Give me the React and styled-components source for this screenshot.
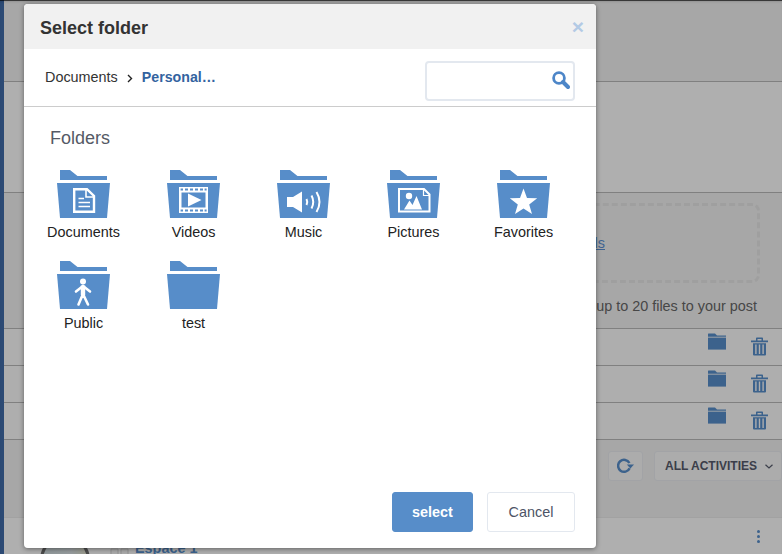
import React from 'react';
import styled, { createGlobalStyle } from 'styled-components';

const GlobalStyle = createGlobalStyle`
  html, body {
    margin: 0;
    padding: 0;
    height: 100%;
    overflow: hidden;
    font-family: "Liberation Sans", Arial, sans-serif;
  }
`;

const Page = styled.div`
  position: relative;
  display: flex;
  width: 782px;
  height: 554px;
  overflow: hidden;
  background: #f0f0f0;
`;

const Rail = styled.div`
  width: 4px;
  flex: none;
  background: #406aa7;
`;

const Main = styled.div`
  flex: 1;
  display: flex;
  flex-direction: column;
  min-width: 0;
`;

const Section = styled.div`
  height: ${(p) => p.$height}px;
  flex: none;
  box-sizing: border-box;
  background: ${(p) => p.$bg || '#f0f0f0'};
  border-bottom: 1px solid ${(p) => p.$line || '#b8b8b8'};
`;

const UploadArea = styled(Section)`
  display: flex;
  flex-direction: column;
  align-items: flex-end;
  padding: 10px 22px 0 0;
`;

const DropZone = styled.div`
  width: 400px;
  height: 80px;
  box-sizing: border-box;
  display: flex;
  align-items: center;
  justify-content: flex-end;
  padding-right: 152px;
  border: 3px dashed #e4e4e4;
  border-radius: 8px;
`;

const DropLink = styled.a`
  color: #5b8fd0;
  font-size: 14.4px;
  text-decoration: underline;
`;

const UploadHint = styled.div`
  margin: 13px 3px 0 0;
  color: #666;
  font-size: 14.4px;
  line-height: 20px;
`;

const FileRow = styled(Section)`
  display: flex;
  justify-content: flex-end;
  align-items: flex-start;
  gap: 25px;
  padding: 4px 14px 0 0;
`;

const Toolbar = styled(Section)`
  display: flex;
  justify-content: flex-end;
  gap: 11px;
  padding-top: 11px;
`;

const ToolButton = styled.div`
  height: 30px;
  box-sizing: border-box;
  display: flex;
  align-items: center;
  gap: 8px;
  padding: ${(p) => p.$pad};
  background: #f6f6f6;
  border: 1px solid #e8eaee;
  border-radius: 3px;
  color: #555a6a;
  font-size: 12px;
  font-weight: 700;
  white-space: nowrap;
`;

const ActivityRow = styled.div`
  position: relative;
  flex: 1;
  display: flex;
  align-items: flex-start;
  padding: 17px 0 0 36px;
  background: #fbfbfb;
`;

const Avatar = styled.div`
  width: 50px;
  height: 50px;
  flex: none;
  box-sizing: border-box;
  border: 3px solid #6a6a6a;
  border-radius: 50%;
  background: linear-gradient(90deg, #cfdade 0%, #d8e0e2 65%, #dcdcc8 100%);
`;

const ActivityMark = styled.svg`
  flex: none;
  margin: 13px 5px 0 20px;
`;

const ActivityName = styled.div`
  margin-top: 5px;
  color: #578dc9;
  font-size: 14.4px;
  font-weight: 700;
  line-height: 16px;
`;

const Kebab = styled.div`
  position: absolute;
  top: 12px;
  right: 22px;
  display: flex;
  flex-direction: column;
  gap: 2px;
`;

const Dot = styled.span`
  width: 3px;
  height: 3px;
  border-radius: 50%;
  background: #578dc9;
`;

const Overlay = styled.div`
  position: absolute;
  inset: 0;
  background: rgba(0, 0, 0, 0.3);
  box-shadow: inset 0 1px 0 rgba(0, 0, 0, 0.6), inset 0 3px 3px -2px rgba(0, 0, 0, 0.25);
`;

const ModalShadow = styled.div`
  position: absolute;
  top: 4px;
  left: 24px;
  width: 572px;
  height: 544px;
  border-radius: 4px;
  box-shadow: 0 1px 5px rgba(0, 0, 0, 0.45);
`;

const Modal = styled.div`
  position: absolute;
  top: 4px;
  left: 24px;
  width: 572px;
  height: 544px;
  display: flex;
  flex-direction: column;
  background: #fff;
  border-radius: 4px;
  overflow: hidden;
`;

const ModalHeader = styled.div`
  height: 45px;
  flex: none;
  display: flex;
  align-items: center;
  justify-content: space-between;
  padding: 3px 12px 0 16px;
  box-sizing: border-box;
  background: #f1f1f1;
`;

const ModalTitle = styled.h3`
  margin: 0;
  color: #333;
  font-size: 18px;
  font-weight: 700;
`;

const Close = styled.span`
  color: #b3cae5;
  font-size: 21px;
  font-weight: 700;
  line-height: 20px;
  margin-top: -3px;
`;

const PathBar = styled.div`
  height: 58px;
  flex: none;
  box-sizing: border-box;
  display: flex;
  align-items: center;
  justify-content: space-between;
  padding: 7px 21px 0 21px;
  border-bottom: 1px solid #ccc;
`;

const Crumbs = styled.div`
  display: flex;
  align-items: center;
  margin-top: -8px;
  font-size: 14.4px;
`;

const Crumb = styled.span`
  color: #333;
`;

const Chevron = styled.span`
  display: flex;
  margin: 2px 9px 0 9px;
`;

const CrumbCurrent = styled.span`
  color: #33639f;
  font-size: 14.2px;
  font-weight: 700;
`;

const SearchBox = styled.div`
  position: relative;
  width: 150px;
  height: 40px;
  box-sizing: border-box;
  border: 2px solid #e3e8ef;
  border-radius: 4px;
`;

const SearchIcon = styled.svg`
  position: absolute;
  top: 8px;
  right: 3px;
`;

const Content = styled.div`
  flex: 1;
  padding: 20px 0 0 4.5px;
`;

const SectionTitle = styled.div`
  margin: 0 0 21px 21.5px;
  color: #555a66;
  font-size: 18px;
  line-height: 22px;
`;

const FolderGrid = styled.div`
  display: grid;
  grid-template-columns: repeat(5, 110px);
  row-gap: 19px;
`;

const FolderItem = styled.div`
  display: flex;
  flex-direction: column;
  align-items: center;
`;

const FolderLabel = styled.div`
  margin-top: 4px;
  color: #222;
  font-size: 14.4px;
  line-height: 20px;
`;

const ModalFooter = styled.div`
  flex: none;
  display: flex;
  justify-content: flex-end;
  gap: 14px;
  padding: 0 21px 16px 0;
`;

const Button = styled.button`
  width: ${(p) => p.$width}px;
  height: 40px;
  box-sizing: border-box;
  border-radius: 3px;
  border: 1px solid ${(p) => (p.$primary ? '#578dc9' : '#e3e8ef')};
  background: ${(p) => (p.$primary ? '#578dc9' : '#fff')};
  color: ${(p) => (p.$primary ? '#fff' : '#4d5466')};
  font-family: inherit;
  font-size: 14.4px;
  font-weight: ${(p) => (p.$primary ? 700 : 400)};
`;

const SmallFolder = () => (
  <svg width="18" height="17" viewBox="0 0 18 17">
    <path d="M0 1Q0 .5 .5 .5H7L9 2.5H18V3.8H0Z" fill="#578dc9" />
    <path d="M0 4.6H18V16.6H0Z" fill="#578dc9" />
  </svg>
);

const Trash = () => (
  <svg width="17" height="19" viewBox="0 0 17 19" style={{ marginTop: 4 }}>
    <path
      d="M0 3.5H17V5.2H0ZM5 3.5V1.2Q5 .4 5.8 .4H11.2Q12 .4 12 1.2V3.5H10.5V1.9H6.5V3.5Z"
      fill="#578dc9"
    />
    <path
      d="M2 6.2H15V17.5Q15 18.6 14 18.6H3Q2 18.6 2 17.5ZM4.2 7.6V17H5.6V7.6ZM7.8 7.6V17H9.2V7.6ZM11.4 7.6V17H12.8V7.6Z"
      fill="#578dc9"
      fillRule="evenodd"
    />
  </svg>
);

const Refresh = () => (
  <svg width="17" height="16" viewBox="0 0 17 16">
    <path d="M12.6 10.2A6 6 0 1 1 12.4 5" fill="none" stroke="#578dc9" strokeWidth="2.5" />
    <path d="M9.8 6.4H17L13.4 10.6Z" fill="#578dc9" />
  </svg>
);

const Caret = () => (
  <svg width="8" height="5" viewBox="0 0 8 5">
    <path d="M.5.7 4 4 7.5.7" fill="none" stroke="#555a6a" strokeWidth="1.2" />
  </svg>
);

const w = '#fff';

const glyphs = {
  documents: (
    <>
      <path d="M17.2 19.2H30L37 26V41.8H17.2Z" fill="none" stroke={w} strokeWidth="2.4" />
      <path d="M29 19V27H37" fill="none" stroke={w} strokeWidth="1.6" />
      <path d="M21.5 28.5H27M21.5 32.5H33M21.5 36.5H33" stroke={w} strokeWidth="1.7" />
    </>
  ),
  videos: (
    <>
      <path
        d="M12 17H41V43H12ZM13.6 18.4V20.6H16V18.4ZM18 18.4V20.6H21V18.4ZM23 18.4V20.6H26V18.4ZM28 18.4V20.6H31V18.4ZM33 18.4V20.6H36V18.4ZM37.6 18.4V20.6H39.6V18.4ZM14.5 22.5V37.6H38.5V22.5ZM13.6 39.4V41.6H16V39.4ZM18 39.4V41.6H21V39.4ZM23 39.4V41.6H26V39.4ZM28 39.4V41.6H31V39.4ZM33 39.4V41.6H36V39.4ZM37.6 39.4V41.6H39.6V39.4Z"
        fill={w}
        fillRule="evenodd"
      />
      <path d="M21 23.5 34.5 30 21 36.5Z" fill={w} />
    </>
  ),
  music: (
    <>
      <path d="M10 27H16L25 21.5V42.5L16 37H10Z" fill={w} />
      <path d="M29.5 29Q31 32 29.5 35" fill="none" stroke={w} strokeWidth="2" />
      <path d="M34.5 25.5Q38 32 34.5 38.5" fill="none" stroke={w} strokeWidth="2" />
      <path d="M39.5 22Q45.5 32 39.5 42" fill="none" stroke={w} strokeWidth="2" />
    </>
  ),
  pictures: (
    <>
      <path d="M12 19H37L42.5 24.5V41.5H12Z" fill="none" stroke={w} strokeWidth="2" />
      <path d="M36.5 19.5V25.5H42" fill="none" stroke={w} strokeWidth="1.2" />
      <circle cx="22" cy="26" r="3.2" fill={w} />
      <path d="M17 39.5 22.5 30.5 25.5 35 29.5 26 35 39.5Z" fill={w} />
    </>
  ),
  favorites: <path d="M26.5 18.5 30 28 40.2 28.2 32.2 34.5 35 44 26.5 38.5 18 44 20.8 34.5 12.8 28.2 23 28Z" fill={w} />,
  public: (
    <>
      <circle cx="26" cy="20.5" r="3" fill={w} />
      <path
        d="M26 25 33 30.5M26 25 19 30.5M26 25V33M26 33 21.5 43.5M26 33 31 43.5"
        fill="none"
        stroke={w}
        strokeWidth="2.6"
        strokeLinecap="round"
      />
      <path d="M23.8 24.5H28.2V34H23.8Z" fill={w} />
    </>
  ),
};

const FolderIcon = ({ glyph }) => (
  <svg width="53" height="48" viewBox="0 0 53 48">
    <path d="M3 0H13L20.5 6H50V10H3Z" fill="#578dc9" />
    <path d="M0 13H53L50 48H3Z" fill="#578dc9" />
    {glyphs[glyph]}
  </svg>
);

const folders = [
  { name: 'Documents', glyph: 'documents' },
  { name: 'Videos', glyph: 'videos' },
  { name: 'Music', glyph: 'music' },
  { name: 'Pictures', glyph: 'pictures' },
  { name: 'Favorites', glyph: 'favorites' },
  { name: 'Public', glyph: 'public' },
  { name: 'test' },
];

const App = () => (
  <>
    <GlobalStyle />
    <Page>
      <Rail />
      <Main>
        <Section $height={82} />
        <Section $height={111} $bg="#fbfbfb" />
        <UploadArea $height={136}>
          <DropZone>
            <DropLink>ls</DropLink>
          </DropZone>
          <UploadHint>up to 20 files to your post</UploadHint>
        </UploadArea>
        {[0, 1, 2].map((row) => (
          <FileRow key={row} $height={37} $bg="#f9f9f9">
            <SmallFolder />
            <Trash />
          </FileRow>
        ))}
        <Toolbar $height={78} $line="#e8e8e8">
          <ToolButton $pad="0 8px">
            <Refresh />
          </ToolButton>
          <ToolButton $pad="0 8px 0 10px">
            ALL ACTIVITIES
            <Caret />
          </ToolButton>
        </Toolbar>
        <ActivityRow>
          <Avatar />
          <ActivityMark width="20" height="14" viewBox="0 0 20 14">
            <path d="M1 1H8V13H1ZM11 1H18V13H11Z" fill="#f4f4f4" stroke="#d0d0d0" />
          </ActivityMark>
          <ActivityName>Espace 1</ActivityName>
          <Kebab>
            <Dot />
            <Dot />
            <Dot />
          </Kebab>
        </ActivityRow>
      </Main>
      <Overlay />
      <ModalShadow />
      <Modal>
        <ModalHeader>
          <ModalTitle>Select folder</ModalTitle>
          <Close>×</Close>
        </ModalHeader>
        <PathBar>
          <Crumbs>
            <Crumb>Documents</Crumb>
            <Chevron>
              <svg width="6" height="9" viewBox="0 0 6 9">
                <path d="M1 1 4.5 4.5 1 8" fill="none" stroke="#222" strokeWidth="1.4" />
              </svg>
            </Chevron>
            <CrumbCurrent>Personal…</CrumbCurrent>
          </Crumbs>
          <SearchBox>
            <SearchIcon width="18" height="19" viewBox="0 0 18 19">
              <circle cx="7" cy="7" r="5.4" fill="none" stroke="#4d86c8" strokeWidth="2.8" />
              <path d="M11 11 16 16" stroke="#4d86c8" strokeWidth="4" strokeLinecap="round" />
            </SearchIcon>
          </SearchBox>
        </PathBar>
        <Content>
          <SectionTitle>Folders</SectionTitle>
          <FolderGrid>
            {folders.map((folder) => (
              <FolderItem key={folder.name}>
                <FolderIcon glyph={folder.glyph} />
                <FolderLabel>{folder.name}</FolderLabel>
              </FolderItem>
            ))}
          </FolderGrid>
        </Content>
        <ModalFooter>
          <Button $primary $width={81}>select</Button>
          <Button $width={88}>Cancel</Button>
        </ModalFooter>
      </Modal>
    </Page>
  </>
);

export default App;
